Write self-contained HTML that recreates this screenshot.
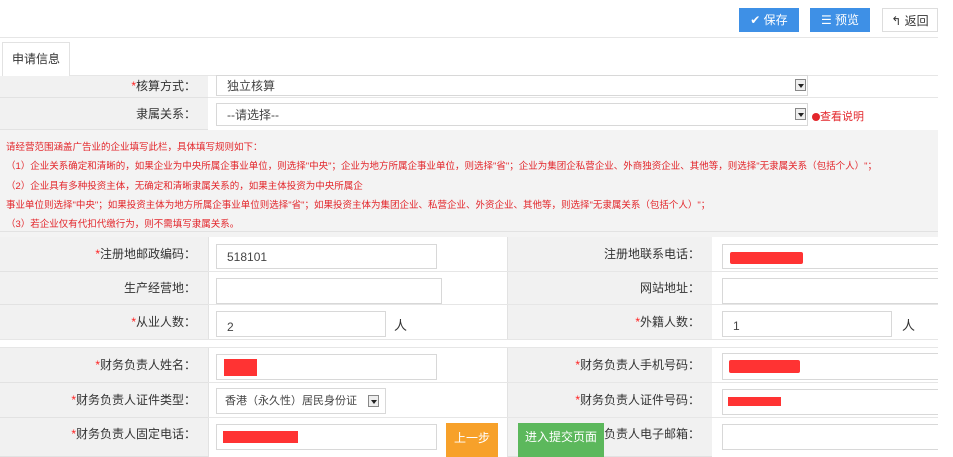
<!DOCTYPE html>
<html><head><meta charset="utf-8"><style>
*{margin:0;padding:0;box-sizing:border-box}
body{width:953px;height:457px;background:#fff;position:relative;overflow:hidden;font-family:"Liberation Sans","Noto Sans CJK SC",sans-serif;font-size:12px;color:#333}
.a{position:absolute}
.btn{position:absolute;top:8px;height:24px;color:#fff;font-size:12px;line-height:24px;text-align:center;background:#3e90e6}
.lab{position:absolute;background:#f1f1f1;border-bottom:1px solid #e2e2e2;text-align:right;padding-right:12px;font-size:12px}
.val{position:absolute;background:#fff;border-bottom:1px solid #e2e2e2}
.inp{position:absolute;border:1px solid #d8d8d8;background:#fff;height:25px;padding-left:10px;line-height:24px;font-size:12px;color:#444}
.r{color:#f22}
.red{position:absolute;background:#f33;border-radius:2px}
.arr{position:absolute;width:11px;height:12px;border:1px solid #888;background:#eee}
.arr:after{content:"";position:absolute;left:2px;top:4px;border-left:3px solid transparent;border-right:3px solid transparent;border-top:4px solid #222}
.note{position:absolute;left:6px;color:#e3262b;font-size:9.5px;white-space:nowrap}
</style></head><body>
<div class="btn" style="left:739px;width:60px">✔ 保存</div>
<div class="btn" style="left:810px;width:60px">☰ 预览</div>
<div class="btn" style="left:882px;width:56px;background:#fff;color:#333;border:1px solid #ddd">↰ 返回</div>
<div class="a" style="left:0;top:37px;width:938px;height:1px;background:#e6e6e6"></div>
<div class="a" style="left:2px;top:42px;width:68px;height:34px;border:1px solid #e2e2e2;border-bottom:none;background:#fff;line-height:32px;text-align:center;font-size:12px">申请信息</div>
<div class="a" style="left:70px;top:75px;width:868px;height:1px;background:#e6e6e6"></div>

<div class="lab" style="left:0;top:76px;width:208px;height:22px;line-height:20px"><span class="r">*</span>核算方式：</div>
<div class="inp" style="left:216px;top:75px;width:592px;height:21px;line-height:20px">独立核算</div>
<div class="arr" style="left:795px;top:79px"></div>
<div class="a" style="left:208px;top:97px;width:730px;height:1px;background:#e6e6e6"></div>
<div class="lab" style="left:0;top:98px;width:208px;height:32px;line-height:32px">隶属关系：</div>
<div class="inp" style="left:216px;top:103px;width:592px;height:23px;line-height:22px">--请选择--</div>
<div class="arr" style="left:795px;top:108px"></div>
<div class="a" style="left:812px;top:108px;color:#e3262b;font-size:11px"><span style="display:inline-block;width:8px;height:8px;border-radius:50%;background:#e3262b;vertical-align:-1px"></span>查看说明</div>
<div class="a" style="left:0;top:130px;width:938px;height:102px;background:#f3f3f3;border-bottom:1px solid #e2e2e2"></div>
<div class="note" style="top:139px">请经营范围涵盖广告业的企业填写此栏，具体填写规则如下：</div>
<div class="note" style="top:158px">（1）企业关系确定和清晰的，如果企业为中央所属企事业单位，则选择"中央"；企业为地方所属企事业单位，则选择"省"；企业为集团企私营企业、外商独资企业、其他等，则选择"无隶属关系（包括个人）"；</div>
<div class="note" style="top:178px">（2）企业具有多种投资主体，无确定和清晰隶属关系的，如果主体投资为中央所属企</div>
<div class="note" style="top:197px;left:6px">事业单位则选择"中央"；如果投资主体为地方所属企事业单位则选择"省"；如果投资主体为集团企业、私营企业、外资企业、其他等，则选择"无隶属关系（包括个人）"；</div>
<div class="note" style="top:216px">（3）若企业仅有代扣代缴行为，则不需填写隶属关系。</div>

<!-- grid 1 -->
<div class="lab" style="left:0;top:237px;width:208px;height:35px;line-height:35px"><span class="r">*</span>注册地邮政编码：</div>
<div class="lab" style="left:0;top:272px;width:208px;height:33px;line-height:33px">生产经营地：</div>
<div class="lab" style="left:0;top:305px;width:208px;height:35px;line-height:35px"><span class="r">*</span>从业人数：</div>
<div class="lab" style="left:508px;top:237px;width:204px;height:35px;line-height:35px">注册地联系电话：</div>
<div class="lab" style="left:508px;top:272px;width:204px;height:33px;line-height:33px">网站地址：</div>
<div class="lab" style="left:508px;top:305px;width:204px;height:35px;line-height:35px"><span class="r">*</span>外籍人数：</div>
<div class="a" style="left:0;top:232px;width:938px;height:5px;background:#f3f3f3"></div>
<div class="a" style="left:208px;top:237px;width:300px;height:103px;border-left:1px solid #e2e2e2;border-right:1px solid #e2e2e2"></div>
<div class="a" style="left:208px;top:271px;width:730px;height:1px;background:#e6e6e6"></div>
<div class="a" style="left:208px;top:304px;width:730px;height:1px;background:#e6e6e6"></div>
<div class="a" style="left:0;top:339px;width:938px;height:1px;background:#e6e6e6"></div>
<div class="inp" style="left:216px;top:244px;width:221px">518101</div>
<div class="inp" style="left:216px;top:278px;width:226px;height:26px"></div>
<div class="inp" style="left:216px;top:311px;width:170px;height:26px;line-height:30px">2</div>
<div class="a" style="left:394px;top:315px;font-size:13px">人</div>
<div class="inp" style="left:722px;top:244px;width:220px"></div>
<div class="red" style="left:730px;top:252px;width:73px;height:12px"></div>
<div class="inp" style="left:722px;top:278px;width:220px;height:26px"></div>
<div class="inp" style="left:722px;top:311px;width:170px;height:26px;line-height:28px">1</div>
<div class="a" style="left:902px;top:315px;font-size:13px">人</div>

<!-- grid 2 -->
<div class="lab" style="left:0;top:348px;width:208px;height:35px;line-height:35px"><span class="r">*</span>财务负责人姓名：</div>
<div class="lab" style="left:0;top:383px;width:208px;height:35px;line-height:35px"><span class="r">*</span>财务负责人证件类型：</div>
<div class="lab" style="left:0;top:418px;width:208px;height:39px;line-height:32px"><span class="r">*</span>财务负责人固定电话：</div>
<div class="lab" style="left:508px;top:348px;width:204px;height:35px;line-height:35px"><span class="r">*</span>财务负责人手机号码：</div>
<div class="lab" style="left:508px;top:383px;width:204px;height:35px;line-height:35px"><span class="r">*</span>财务负责人证件号码：</div>
<div class="lab" style="left:508px;top:418px;width:204px;height:39px;line-height:32px">财务负责人电子邮箱：</div>
<div class="a" style="left:0;top:347px;width:938px;height:1px;background:#e6e6e6"></div>
<div class="a" style="left:208px;top:348px;width:300px;height:109px;border-left:1px solid #e2e2e2;border-right:1px solid #e2e2e2"></div>
<div class="a" style="left:208px;top:382px;width:730px;height:1px;background:#e6e6e6"></div>
<div class="a" style="left:208px;top:417px;width:730px;height:1px;background:#e6e6e6"></div>
<div class="inp" style="left:216px;top:354px;width:221px;height:26px"></div>
<div class="red" style="left:224px;top:359px;width:33px;height:17px;border-radius:0"></div>
<div class="inp" style="left:216px;top:388px;width:170px;height:26px;padding-left:8px;font-size:11px">香港（永久性）居民身份证</div>
<div class="arr" style="left:368px;top:395px"></div>
<div class="inp" style="left:216px;top:424px;width:221px;height:26px"></div>
<div class="red" style="left:223px;top:431px;width:75px;height:12px;border-radius:0"></div>
<div class="a" style="left:446px;top:423px;width:52px;height:34px;background:#f7a12a;color:#fff;line-height:30px;text-align:center">上一步</div>
<div class="a" style="left:518px;top:423px;width:86px;height:34px;background:#5cb85c;color:#fff;line-height:28px;text-align:center">进入提交页面</div>
<div class="inp" style="left:722px;top:353px;width:220px;height:27px"></div>
<div class="red" style="left:729px;top:360px;width:71px;height:13px"></div>
<div class="inp" style="left:722px;top:389px;width:220px;height:26px"></div>
<div class="red" style="left:728px;top:397px;width:53px;height:9px;border-radius:0"></div>
<div class="inp" style="left:722px;top:424px;width:220px;height:26px"></div>
<div class="a" style="left:938px;top:0;width:15px;height:457px;background:#fff"></div>
</body></html>
